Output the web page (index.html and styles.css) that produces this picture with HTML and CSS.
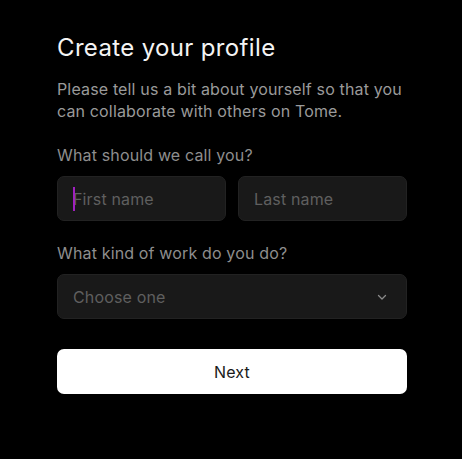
FILE: index.html
```html
<!DOCTYPE html>
<html>
<head>
<meta charset="utf-8">
<link rel="stylesheet" href="styles.css">
</head>
<body>
<main class="page">
  <h1 class="title">Create your profile</h1>
  <p class="intro">Please tell us a bit about yourself so that you can collaborate with others on Tome.</p>
  <div class="label">What should we call you?</div>
  <div class="name-row">
    <div class="field"><span class="caret"></span><span class="placeholder">First name</span></div>
    <div class="field"><span class="placeholder">Last name</span></div>
  </div>
  <div class="label label-work">What kind of work do you do?</div>
  <div class="field select">
    <span class="placeholder">Choose one</span>
    <svg class="chevron" width="12" height="12" viewBox="0 0 12 12"><path d="M2.5 4.5 L6 8 L9.5 4.5" fill="none" stroke="#8a8a8a" stroke-width="1.3" stroke-linecap="round" stroke-linejoin="round"/></svg>
  </div>
  <button class="next">Next</button>
</main>
</body>
</html>
```
FILE: styles.css
```css
html, body {
  margin: 0;
  padding: 0;
  background: #000;
}
body {
  font-family: Inter, "Noto Sans", sans-serif;
  color: #fff;
}
.page {
  width: 350px;
  margin-left: 57px;
  padding-top: 32px;
  display: flex;
  flex-direction: column;
}
.title {
  margin: 0;
  font-size: 24px;
  font-weight: 400;
  line-height: 32px;
  color: #f4f4f4;
  letter-spacing: 0.35px;
}
.intro {
  margin: 14px 0 0;
  font-size: 16px;
  line-height: 22px;
  color: #9a9a9a;
  letter-spacing: 0.15px;
}
.label {
  margin-top: 22px;
  font-size: 16px;
  line-height: 22px;
  color: #8e8e8e;
  letter-spacing: 0.15px;
}
.label-work {
  margin-top: 21px;
}
.name-row {
  margin-top: 10px;
  display: flex;
  gap: 12px;
}
.name-row .field {
  flex: 1;
}
.field {
  height: 45px;
  box-sizing: border-box;
  background: #191919;
  border: 1px solid #222;
  border-radius: 7px;
  display: flex;
  align-items: center;
  padding: 0 15px;
  position: relative;
}
.placeholder {
  font-size: 16px;
  color: #5f5f5f;
  letter-spacing: 0.15px;
}
.caret {
  position: absolute;
  left: 15px;
  top: 10px;
  width: 2px;
  height: 24px;
  background: #a020c0;
}
.select {
  margin-top: 10px;
  justify-content: space-between;
  padding-right: 18px;
}
.chevron {
  display: block;
}
.next {
  margin-top: 30px;
  height: 45px;
  border: none;
  border-radius: 7px;
  background: #fff;
  color: #1a1a1a;
  font-family: Inter, "Noto Sans", sans-serif;
  font-size: 16px;
  letter-spacing: 0.15px;
  padding: 0;
}
```
